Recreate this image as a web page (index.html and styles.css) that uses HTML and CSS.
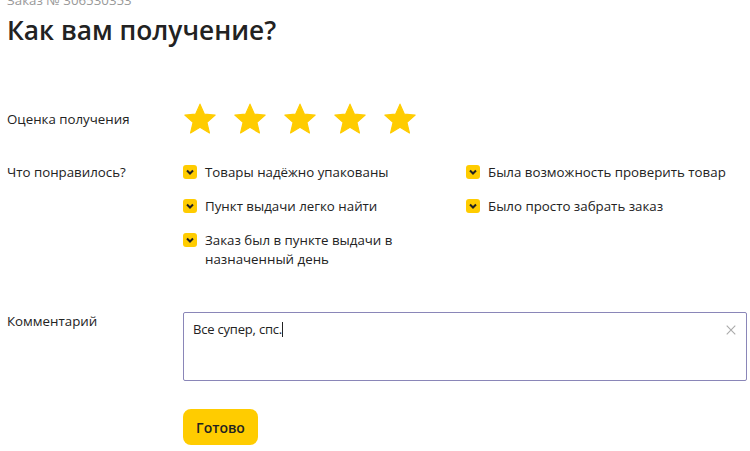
FILE: index.html
```html
<!DOCTYPE html>
<html lang="ru">
<head>
    <title>Отзыв о получении заказа</title>
    <meta charset="UTF-8">
    <link rel="stylesheet" href="styles.css">
</head>
<body>
<div class="page">
    <div class="order">Заказ № 306530353</div>
    <h1 class="title">Как вам получение?</h1>

    <div class="row rating-row">
        <div class="label">Оценка получения</div>
        <div class="stars">
            <svg class="star" viewBox="0 0 24 24"><path d="M12 1.5l3.1 7.1 7.6.7-5.8 5.1 1.8 7.5L12 17.9l-6.7 4 1.8-7.5-5.8-5.1 7.6-.7z"/></svg>
            <svg class="star" viewBox="0 0 24 24"><path d="M12 1.5l3.1 7.1 7.6.7-5.8 5.1 1.8 7.5L12 17.9l-6.7 4 1.8-7.5-5.8-5.1 7.6-.7z"/></svg>
            <svg class="star" viewBox="0 0 24 24"><path d="M12 1.5l3.1 7.1 7.6.7-5.8 5.1 1.8 7.5L12 17.9l-6.7 4 1.8-7.5-5.8-5.1 7.6-.7z"/></svg>
            <svg class="star" viewBox="0 0 24 24"><path d="M12 1.5l3.1 7.1 7.6.7-5.8 5.1 1.8 7.5L12 17.9l-6.7 4 1.8-7.5-5.8-5.1 7.6-.7z"/></svg>
            <svg class="star" viewBox="0 0 24 24"><path d="M12 1.5l3.1 7.1 7.6.7-5.8 5.1 1.8 7.5L12 17.9l-6.7 4 1.8-7.5-5.8-5.1 7.6-.7z"/></svg>
        </div>
    </div>

    <div class="row liked-row">
        <div class="label">Что понравилось?</div>
        <div class="checks">
            <div class="check">
                <span class="box"><svg viewBox="0 0 14 14"><path d="M4 5.5l3 3 3-3"/></svg></span>
                <span>Товары надёжно упакованы</span>
            </div>
            <div class="check">
                <span class="box"><svg viewBox="0 0 14 14"><path d="M4 5.5l3 3 3-3"/></svg></span>
                <span>Была возможность проверить товар</span>
            </div>
            <div class="check">
                <span class="box"><svg viewBox="0 0 14 14"><path d="M4 5.5l3 3 3-3"/></svg></span>
                <span>Пункт выдачи легко найти</span>
            </div>
            <div class="check">
                <span class="box"><svg viewBox="0 0 14 14"><path d="M4 5.5l3 3 3-3"/></svg></span>
                <span>Было просто забрать заказ</span>
            </div>
            <div class="check">
                <span class="box"><svg viewBox="0 0 14 14"><path d="M4 5.5l3 3 3-3"/></svg></span>
                <span>Заказ был в пункте выдачи в назначенный день</span>
            </div>
        </div>
    </div>

    <div class="row comment-row">
        <div class="label">Комментарий</div>
        <div class="field">
            <div class="text">Все супер, спс.<span class="caret"></span></div>
            <svg class="clear" viewBox="0 0 14 14"><path d="M2 2l10 10M12 2L2 12"/></svg>
        </div>
    </div>

    <div class="row">
        <div class="label"></div>
        <button class="done">Готово</button>
    </div>
</div>
</body>
</html>
```

FILE: styles.css
```css
body {
    margin: 0;
    background-color: #fff;
    color: #222;
    font: 13.3px "Open Sans", Arial, sans-serif;
}

.page {
    padding: 0 3px 0 7px;
}

.order {
    margin-top: -9px;
    color: #999;
    font-size: 13.3px;
    line-height: 18px;
}

.title {
    margin: 5px 0 0;
    font: 600 26.3px "Open Sans", Arial, sans-serif;
    line-height: 32px;
    color: #222;
}

.row {
    display: flex;
}

.label {
    width: 176px;
    flex-shrink: 0;
    line-height: 20px;
}

.rating-row {
    margin-top: 56px;
    align-items: center;
}

.stars {
    display: flex;
    gap: 16px;
}

.star {
    width: 34px;
    height: 34px;
    fill: #fc0;
    stroke: #fc0;
    stroke-width: 0.8;
    stroke-linejoin: round;
}

.liked-row {
    margin-top: 27px;
}

.liked-row .label {
    line-height: 19px;
}

.checks {
    display: grid;
    grid-template-columns: 283px 1fr;
    row-gap: 15px;
}

.check {
    display: flex;
    align-items: flex-start;
    gap: 8px;
    line-height: 19px;
    padding-right: 40px;
}

.check:nth-child(even) {
    padding-right: 0;
}

.box {
    flex-shrink: 0;
    width: 14px;
    height: 14px;
    margin-top: 2px;
    border-radius: 3px;
    background-color: #fc0;
}

.box svg {
    display: block;
    width: 14px;
    height: 14px;
    fill: none;
    stroke: #222;
    stroke-width: 2;
}

.comment-row {
    margin-top: 42px;
}

.field {
    flex: 1;
    height: 69px;
    margin-top: 1px;
    box-sizing: border-box;
    border: 1px solid #8a86b8;
    border-radius: 2px;
    padding: 6px 9px;
    display: flex;
    justify-content: space-between;
}

.text {
    line-height: 20px;
    font-size: 13px;
    letter-spacing: -0.2px;
}

.caret {
    display: inline-block;
    width: 1px;
    height: 15px;
    background-color: #222;
    vertical-align: -3px;
}

.clear {
    width: 12px;
    height: 12px;
    margin-top: 5px;
    fill: none;
    stroke: #aaa;
    stroke-width: 1.3;
}

.done {
    margin-top: 28px;
    width: 75px;
    height: 36px;
    border: none;
    border-radius: 8px;
    background-color: #fc0;
    color: #222;
    font: 600 14px "Open Sans", Arial, sans-serif;
    cursor: pointer;
}
```
